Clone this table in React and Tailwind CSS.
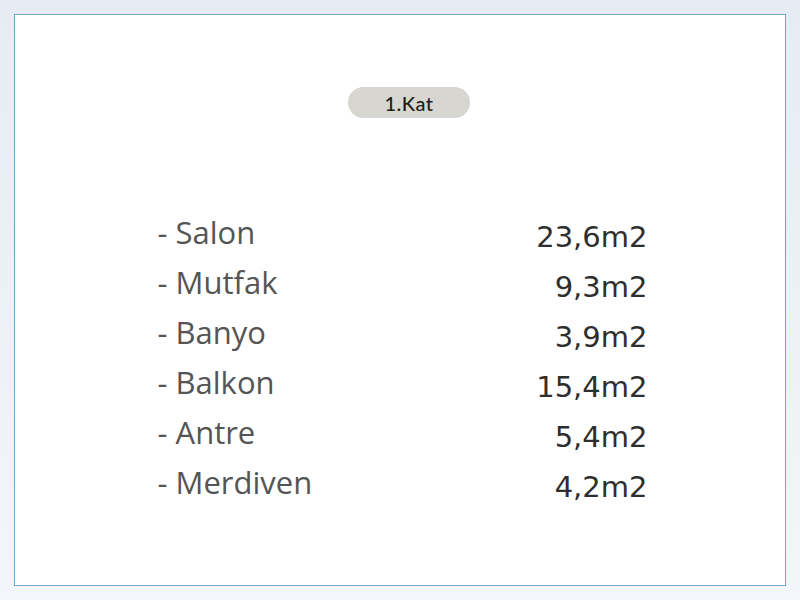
import React from "react";

const rooms = [
  { name: "Salon", area: "23,6m2" },
  { name: "Mutfak", area: "9,3m2" },
  { name: "Banyo", area: "3,9m2" },
  { name: "Balkon", area: "15,4m2" },
  { name: "Antre", area: "5,4m2" },
  { name: "Merdiven", area: "4,2m2" },
];

export default function App() {
  return (
    <div className="w-[800px] h-[600px] overflow-hidden bg-gradient-to-b from-[#e6ecf4] to-[#f3f6fa] pt-[14px] px-[14px]">
      {/* Card */}
      <div className="h-[572px] bg-white border border-[#6fa8cc] flex flex-col items-center">
        <div className="mt-[72px] ml-[18px] w-[122px] h-[31px] rounded-full bg-[#d7d6d1] flex items-center justify-center text-[20px] font-medium text-[#1e1e1e] font-['Lato',sans-serif] tracking-wide">
          1.Kat
        </div>

        <div className="mt-[91px] ml-[5px] w-[490px] flex flex-col">
          {rooms.map((room) => (
            <div key={room.name} className="h-[50px] flex items-center justify-between">
              <span className="text-[31px] text-[#555] font-['Open_Sans',sans-serif] leading-none -mt-[3px]">
                - {room.name}
              </span>
              <span className="text-[29px] text-[#2e2e2e] font-['DejaVu_Sans',sans-serif] leading-none mt-[6px]">
                {room.area}
              </span>
            </div>
          ))}
        </div>
      </div>
    </div>
  );
}
